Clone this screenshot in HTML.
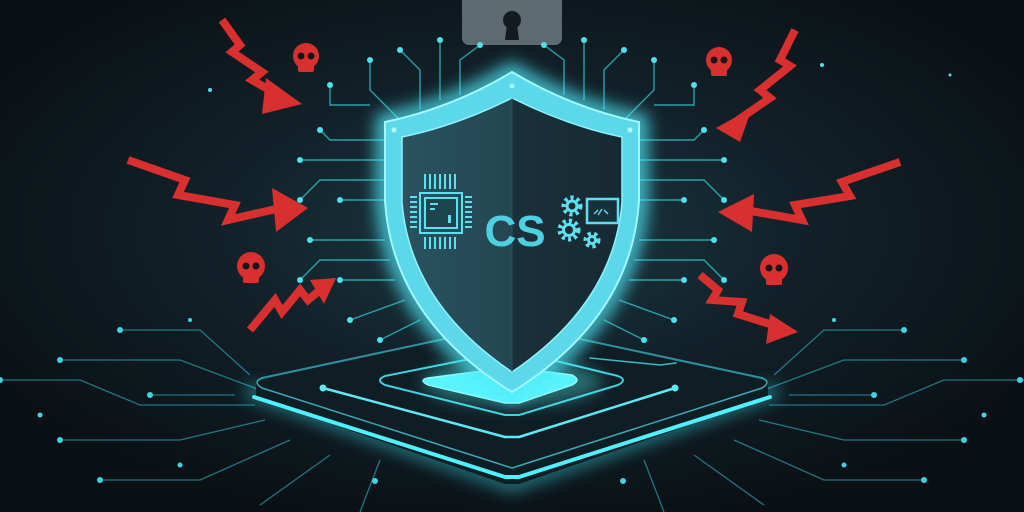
<!DOCTYPE html>
<html><head><meta charset="utf-8"><style>
html,body{margin:0;padding:0;background:#0b1116;}
svg{display:block}
</style></head><body>
<svg width="1024" height="512" viewBox="0 0 1024 512" xmlns="http://www.w3.org/2000/svg">
<defs>
<radialGradient id="bg" cx="50%" cy="45%" r="60%">
<stop offset="0" stop-color="#1c3a44"/><stop offset="0.45" stop-color="#12222a"/><stop offset="1" stop-color="#0a1014"/>
</radialGradient>
<linearGradient id="sh" x1="0" x2="1">
<stop offset="0" stop-color="#2a5260"/><stop offset="0.5" stop-color="#244652"/><stop offset="0.5" stop-color="#1a303a"/><stop offset="1" stop-color="#172a33"/>
</linearGradient>
<filter id="glow" x="-30%" y="-30%" width="160%" height="160%"><feGaussianBlur stdDeviation="8"/></filter>
</defs>
<rect width="1024" height="512" fill="url(#bg)"/>

<rect x="462" y="-10" width="100" height="55" rx="7" fill="#5d6a70"/>
<circle cx="512" cy="20" r="9" fill="#141b20"/>
<path d="M507,24 L505,40 L519,40 L517,24Z" fill="#141b20"/>

<g stroke="#2fb6c4" stroke-width="1.4" fill="none" opacity="0.85">
<path d="M400,120 L370,90 L370,60"/><path d="M420,110 L420,70 L400,50"/><path d="M440,100 L440,40"/><path d="M460,95 L460,60 L480,45"/>
<path d="M390,140 L330,140 L320,130"/><path d="M385,160 L300,160"/><path d="M385,180 L320,180 L300,200"/><path d="M385,200 L340,200"/>
<path d="M385,240 L310,240"/><path d="M390,260 L320,260 L300,280"/><path d="M395,280 L340,280"/><path d="M405,300 L350,320"/><path d="M420,320 L380,340"/>
<path d="M624,120 L654,90 L654,60"/><path d="M604,110 L604,70 L624,50"/><path d="M584,100 L584,40"/><path d="M564,95 L564,60 L544,45"/>
<path d="M634,140 L694,140 L704,130"/><path d="M639,160 L724,160"/><path d="M639,180 L704,180 L724,200"/><path d="M639,200 L684,200"/>
<path d="M639,240 L714,240"/><path d="M634,260 L704,260 L724,280"/><path d="M629,280 L684,280"/><path d="M619,300 L674,320"/><path d="M604,320 L644,340"/>
<path d="M370,105 L330,105 L330,85"/><path d="M654,105 L694,105 L694,85"/>
</g>
<g fill="#4fe0ee">
<circle cx="370" cy="60" r="3"/><circle cx="400" cy="50" r="3"/><circle cx="440" cy="40" r="3"/><circle cx="480" cy="45" r="3"/>
<circle cx="320" cy="130" r="3"/><circle cx="300" cy="160" r="3"/><circle cx="300" cy="200" r="3"/><circle cx="340" cy="200" r="3"/>
<circle cx="310" cy="240" r="3"/><circle cx="300" cy="280" r="3"/><circle cx="340" cy="280" r="3"/><circle cx="350" cy="320" r="3"/><circle cx="380" cy="340" r="3"/>
<circle cx="654" cy="60" r="3"/><circle cx="624" cy="50" r="3"/><circle cx="584" cy="40" r="3"/><circle cx="544" cy="45" r="3"/>
<circle cx="704" cy="130" r="3"/><circle cx="724" cy="160" r="3"/><circle cx="724" cy="200" r="3"/><circle cx="684" cy="200" r="3"/>
<circle cx="714" cy="240" r="3"/><circle cx="724" cy="280" r="3"/><circle cx="684" cy="280" r="3"/><circle cx="674" cy="320" r="3"/><circle cx="644" cy="340" r="3"/>
<circle cx="330" cy="85" r="3"/><circle cx="694" cy="85" r="3"/>
<circle cx="822" cy="65" r="2"/><circle cx="210" cy="90" r="2"/><circle cx="950" cy="75" r="1.5"/>
</g>

<g stroke="#2a9fb0" stroke-width="1.3" fill="none" opacity="0.7">
<path d="M260,390 L180,360 L60,360"/><path d="M255,405 L140,405 L80,380 L0,380"/><path d="M265,420 L180,440 L60,440"/><path d="M290,440 L200,480 L100,480"/><path d="M330,455 L260,505"/>
<path d="M250,375 L200,330 L120,330"/><path d="M235,395 L150,395"/>
<path d="M764,390 L844,360 L964,360"/><path d="M769,405 L884,405 L944,380 L1024,380"/><path d="M759,420 L844,440 L964,440"/><path d="M734,440 L824,480 L924,480"/><path d="M694,455 L764,505"/>
<path d="M774,375 L824,330 L904,330"/><path d="M789,395 L874,395"/>
<path d="M380,460 L360,512"/><path d="M644,460 L664,512"/>
</g>
<g fill="#3fd3e4">
<circle cx="60" cy="360" r="3"/><circle cx="0" cy="380" r="3"/><circle cx="60" cy="440" r="3"/><circle cx="100" cy="480" r="3"/><circle cx="120" cy="330" r="3"/><circle cx="150" cy="395" r="3"/><circle cx="180" cy="465" r="2.5"/><circle cx="40" cy="415" r="2.5"/>
<circle cx="964" cy="360" r="3"/><circle cx="1020" cy="380" r="3"/><circle cx="964" cy="440" r="3"/><circle cx="924" cy="480" r="3"/><circle cx="904" cy="330" r="3"/><circle cx="874" cy="395" r="3"/><circle cx="844" cy="465" r="2.5"/><circle cx="984" cy="415" r="2.5"/>
<circle cx="190" cy="320" r="2"/><circle cx="834" cy="320" r="2"/>
<circle cx="375" cy="481" r="3"/><circle cx="623" cy="481" r="3"/>
</g>

<g fill="none" stroke-linejoin="round" stroke-linecap="round">
<path d="M252,392 L512,485 L772,392" stroke="#3fe0f0" stroke-width="14" filter="url(#glow)" opacity="0.5"/>
<path d="M256,382 L505,326 L519,326 L768,382 L768,398 L519,484 L505,484 L256,398 Z" fill="#0f1d24"/>
<path d="M262,378 L505,326 L519,326 L762,378" stroke="#2f8fa0" stroke-width="2"/>
<path d="M262,378 Q252,382 262,388 L512,468 L762,388 Q772,382 762,378" stroke="#3aa8b8" stroke-width="1.5"/>
<path d="M254,397 L505,477 L519,477 L770,397" stroke="#4ff0ff" stroke-width="4"/>
<path d="M323,388 L505,437 L519,437 L675,388" stroke="#5fe8f6" stroke-width="2.5"/>
<circle cx="323" cy="388" r="3.5" fill="#5fe8f6" stroke="none"/><circle cx="675" cy="388" r="3.5" fill="#5fe8f6" stroke="none"/>
<path d="M385,376 L505,352 L519,352 L618,376 Q628,380 618,385 L519,415 L505,415 L385,385 Q375,380 385,376 Z" stroke="#3fd0e0" stroke-width="2"/>
<path d="M590,358 L660,365 L676,363" stroke="#3fb8c8" stroke-width="1.5"/>
</g>
<ellipse cx="512" cy="382" rx="90" ry="24" fill="#5ff" opacity="0.35" filter="url(#glow)"/>
<path d="M428,378 L505,368 L519,368 L572,375 Q582,380 572,385 L519,403 L505,403 L428,385 Q418,380 428,378 Z" fill="#5af4ff" stroke="#8ffaff" stroke-width="1.5" stroke-linejoin="round"/>

<path d="M512,72 Q452,108 385,122 L385,200 Q392,318 512,392 Q632,318 639,200 L639,122 Q572,108 512,72 Z" fill="none" stroke="#4fe8f8" stroke-width="18" filter="url(#glow)" opacity="0.8"/>
<path d="M512,72 Q452,108 385,122 L385,200 Q392,318 512,392 Q632,318 639,200 L639,122 Q572,108 512,72 Z" fill="#5cd8ea" stroke="#9ff8ff" stroke-width="2"/>
<path d="M512,98 Q456,126 402,137 L402,202 Q410,303 512,372 Q614,303 622,202 L622,137 Q568,126 512,98 Z" fill="url(#sh)" stroke="#8ff4ff" stroke-width="1.5"/>
<line x1="512" y1="98" x2="512" y2="372" stroke="#2a5460" stroke-width="1"/>
<g fill="#b0ffff"><circle cx="512" cy="86" r="2.5"/><circle cx="394" cy="130" r="2.5"/><circle cx="630" cy="130" r="2.5"/></g>

<g stroke="#5fe0f0" stroke-width="2" fill="none">
<rect x="420" y="193" width="42" height="40"/>
<rect x="425" y="198" width="32" height="30" fill="#1e4450"/>
<path d="M410,197h7M410,202h7M410,207h7M410,212h7M410,217h7M410,222h7M410,227h7M465,197h7M465,202h7M465,207h7M465,212h7M465,217h7M465,222h7M465,227h7M425,174v15M430,174v15M435,174v15M440,174v15M445,174v15M450,174v15M455,174v15M425,237v12M430,237v12M435,237v12M440,237v12M445,237v12M450,237v12M455,237v12"/>
</g>
<rect x="430" y="203" width="8" height="2" fill="#5fe0f0"/><rect x="430" y="208" width="5" height="2" fill="#5fe0f0"/><rect x="448" y="215" width="3" height="8" fill="#5fe0f0"/>
<text x="515" y="246" text-anchor="middle" font-family="Liberation Sans, sans-serif" font-weight="bold" font-size="44" fill="#4fd0e0">CS</text>
<g fill="none" stroke="#5fe0f0" stroke-width="5" stroke-dasharray="3 3">
<circle cx="572" cy="206" r="8"/><circle cx="569" cy="230" r="9"/><circle cx="592" cy="240" r="6"/>
</g>
<g fill="none" stroke="#5fe0f0" stroke-width="3">
<circle cx="572" cy="206" r="5"/><circle cx="569" cy="230" r="5.5"/><circle cx="592" cy="240" r="3.5"/>
</g>
<rect x="587" y="199" width="31" height="24" fill="#15323c" stroke="#5fe0f0" stroke-width="2.5"/>
<path d="M594,214 l4,-4 M598,215 l4,-6 M604,210 l4,4" stroke="#5fe0f0" stroke-width="1.3" fill="none"/>

<g fill="none" stroke="#d8302f" stroke-width="8" stroke-linejoin="miter">
<path d="M222,20 L240,45 L232,52 L262,72 L252,80 L278,95"/>
<path d="M128,160 L185,180 L178,195 L235,205 L228,220 L280,208"/>
<path d="M250,330 L275,300 L282,312 L300,290 L308,300 L320,290"/>
<path d="M795,30 L780,60 L790,66 L760,90 L770,98 L738,120"/>
<path d="M900,162 L842,182 L850,196 L795,205 L802,220 L745,210"/>
<path d="M700,275 L718,290 L712,300 L742,302 L738,314 L776,326"/>
</g>
<g fill="#d8302f">
<polygon points="266,78 302,104 262,114"/>
<polygon points="272,188 308,208 276,232"/>
<polygon points="310,280 336,278 324,304"/>
<polygon points="752,108 716,128 740,142"/>
<polygon points="754,194 718,212 752,232"/>
<polygon points="770,314 798,332 766,344"/>
</g>
<g fill="#d8302f">
<g transform="translate(306,56)"><circle r="13"/><rect x="-8" y="6" width="16" height="10" rx="2"/></g>
<g transform="translate(719,60)"><circle r="13"/><rect x="-8" y="6" width="16" height="10" rx="2"/></g>
<g transform="translate(251,266)"><circle r="14"/><rect x="-8" y="7" width="16" height="10" rx="2"/></g>
<g transform="translate(774,268)"><circle r="14"/><rect x="-8" y="7" width="16" height="10" rx="2"/></g>
</g>
<g fill="#1a1418">
<circle cx="301" cy="56" r="3.5"/><circle cx="311" cy="56" r="3.5"/>
<circle cx="714" cy="60" r="3.5"/><circle cx="724" cy="60" r="3.5"/>
<circle cx="246" cy="266" r="3.5"/><circle cx="256" cy="266" r="3.5"/>
<circle cx="769" cy="268" r="3.5"/><circle cx="779" cy="268" r="3.5"/>
</g>
</svg>
</body></html>
